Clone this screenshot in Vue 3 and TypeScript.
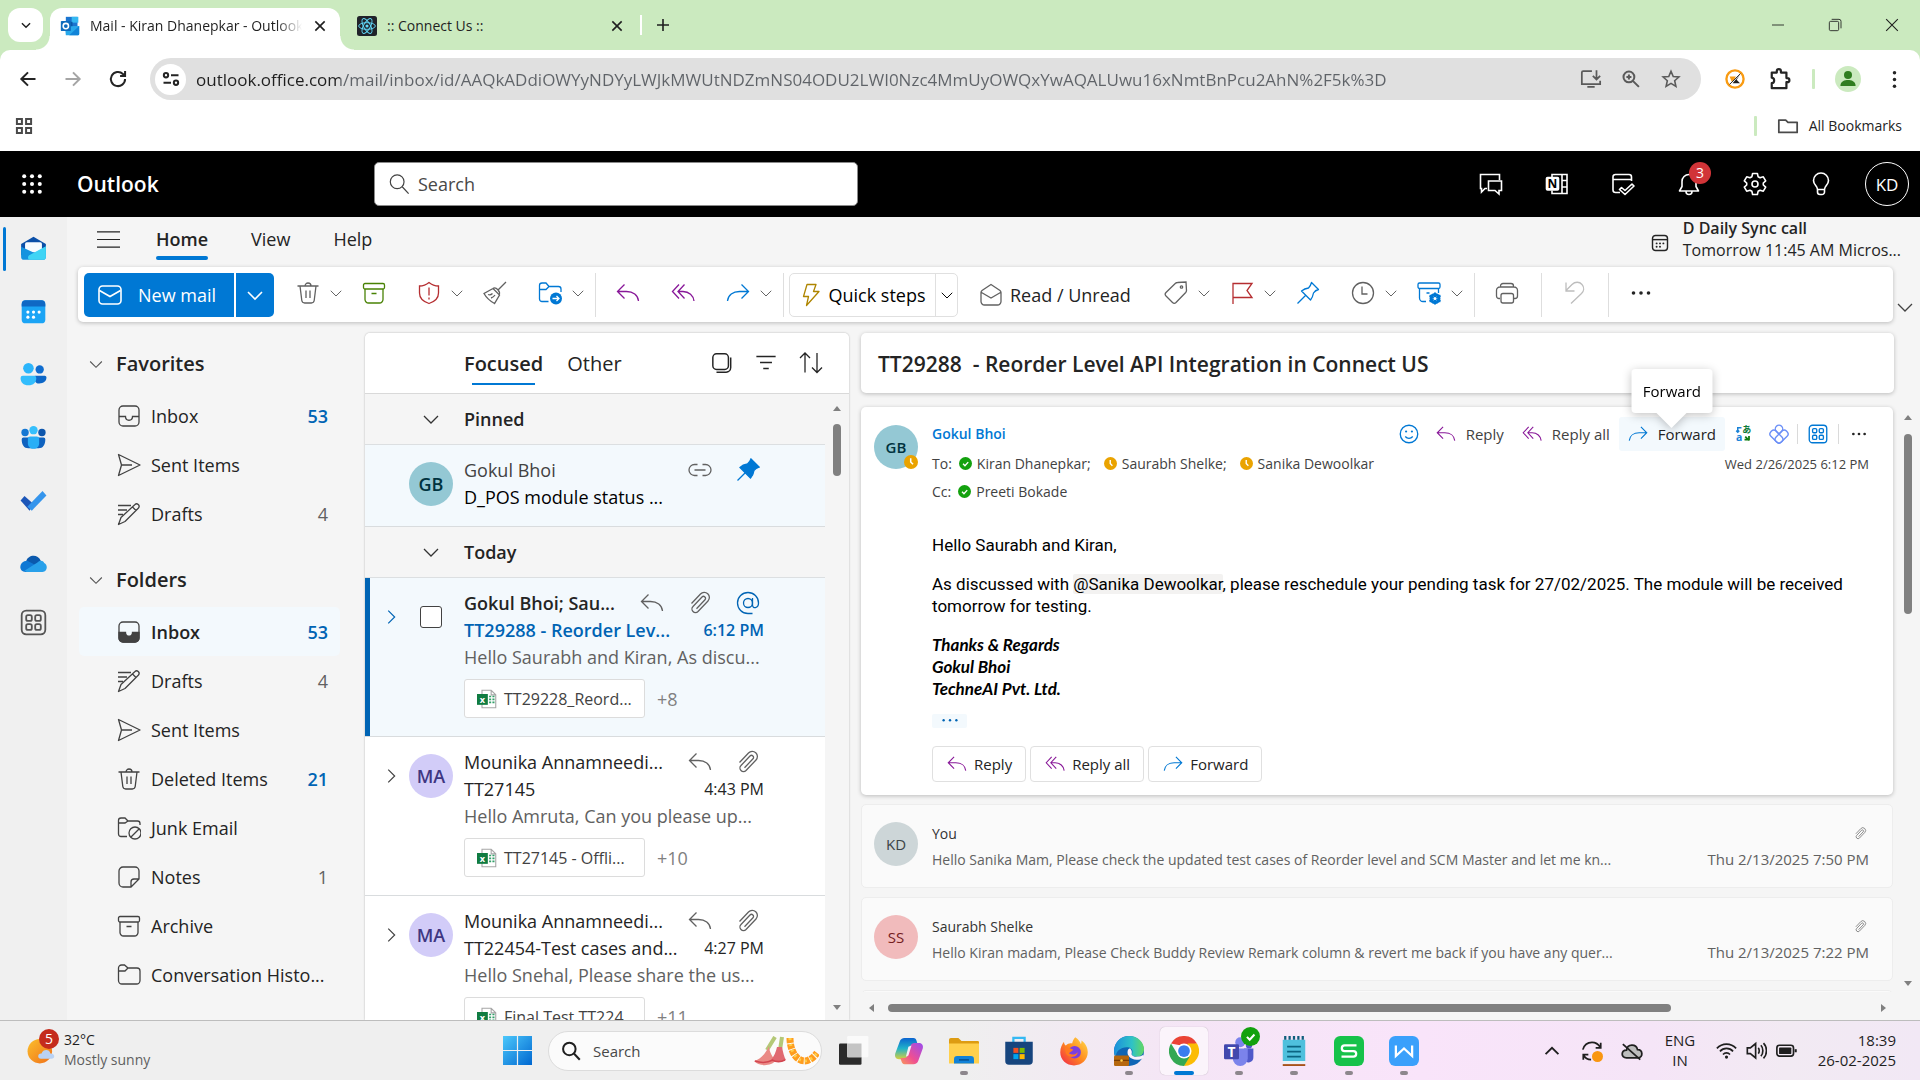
<script setup lang="ts">
import { h } from 'vue'

interface IconProps {
  name: string
  size?: number
}

interface Folder {
  label: string
  icon: string
  count?: number
  unread?: boolean
  active?: boolean
}

interface Mail {
  id: string
  initials: string
  from: string
  subject: string
  preview: string
  time: string
  attachment: string
  more: string
  icons: string[]
  selected?: boolean
}

const glyphs: Record<string, string> = {
  chevDown: '<path d="m5 9 7 7 7-7"/>',
  chevRight: '<path d="m9 5 7 7-7 7"/>',
  chevUp: '<path d="m5 15.500 7-7 7 7" stroke-width="2"/>',
  close: '<path d="m5 5 14 14M19 5 5 19"/>',
  plus: '<path d="M12 3v18M3 12h18"/>',
  minimize: '<path d="M3 12h18"/>',
  restore: '<rect x="3.500" y="6.500" width="14" height="14" rx="2"/><path d="M7 3.500h11a3 3 0 0 1 3 3V17"/>',
  back: '<path d="M21 12H4M12 4l-8 8 8 8"/>',
  next: '<path d="M3 12h17M12 4l8 8-8 8"/>',
  reload: '<path d="M20.500 12a8.500 8.500 0 1 1-2.600-6.100L20.500 8.400M20.500 2.500v6h-6"/>',
  tune: '<circle cx="6" cy="7.500" r="2.600"/><path d="M12 7.500h9M3 16.500h9"/><circle cx="18" cy="16.500" r="2.600"/>',
  apps4: '<path d="M3.500 3.500h6v6h-6zM14.500 3.500h6v6h-6zM3.500 14.500h6v6h-6zM14.500 14.500h6v6h-6z"/>',
  install: '<path d="M13 3.500H3.500a1.500 1.500 0 0 0-1.500 1.500v12.500h20V14M8 20.500h8M18 2.500v9M14 8.500l4 4 4-4"/>',
  zoomIn: '<circle cx="9.500" cy="9.500" r="6.500"/><path d="m14.500 14.500 7 7M9.500 6.500v6M6.500 9.500h6"/>',
  star: '<path d="m12 2.800 2.700 6.200 6.800.6-5.100 4.500 1.500 6.700L12 17.300l-5.900 3.500 1.500-6.700-5.100-4.500 6.800-.6z"/>',
  blocker: '<circle cx="12" cy="12" r="10.300" stroke="#f99b12" stroke-width="2.800" fill="#fff"/><path d="M9 17h9l-4-4 4-6" fill="#222" stroke="none"/><path d="M5.500 9H13l-2 4-3 2z" fill="#f99b12" stroke="none"/><path d="m5.500 18.500 13-13" stroke="#333" stroke-width="1.200"/>',
  puzzle: '<path d="M3 5h5.500V3.500a2 2 0 0 1 4.500 0V5H19v6h1a2 2 0 0 1 0 4.500h-1V22H3v-5.500c3.500-.4 3.500-5.600 0-6z" stroke-linejoin="round"/>',
  person: '<circle cx="12" cy="12" r="12" fill="#cbeabf" stroke="none"/><circle cx="12" cy="8.300" r="3.700" fill="#2f7d1f" stroke="none"/><path d="M5 18.500c0-4.500 4-5.500 7-5.500s7 1 7 5.500z" fill="#2f7d1f" stroke="none"/>',
  kebab: '<g fill="currentColor" stroke="none"><circle cx="12" cy="3.500" r="2.200"/><circle cx="12" cy="12" r="2.200"/><circle cx="12" cy="20.500" r="2.200"/></g>',
  folderLine: '<path d="M2 5.500h7.500l2.500 2.500H22v11H2z" stroke-linejoin="round"/>',
  outlook: '<rect x="7" y="1" width="14" height="12" fill="#1b75d0" stroke="none"/><rect x="14" y="1" width="8" height="7" fill="#35b8f1" stroke="none"/><rect x="7" y="7" width="8" height="8" fill="#0a5aa8" stroke="none"/><path d="M6 12.500 23 12v9.500a1.500 1.500 0 0 1-1.500 1.500H7z" fill="#28a8ea" stroke="none"/><path d="m23 12-12 11h10.500a1.500 1.500 0 0 0 1.500-1.500z" fill="#1184d8" stroke="none"/><rect x="1" y="6" width="12" height="12" rx="1" fill="#0f6cbd" stroke="none"/><circle cx="7" cy="12" r="3.200" stroke="#fff" stroke-width="1.900"/>',
  react: '<rect width="24" height="24" rx="3" fill="#20232a" stroke="none"/><g stroke="#61dafb" stroke-width="1.100"><ellipse cx="12" cy="12" rx="10" ry="4"/><ellipse cx="12" cy="12" rx="10" ry="4" transform="rotate(60 12 12)"/><ellipse cx="12" cy="12" rx="10" ry="4" transform="rotate(120 12 12)"/></g><circle cx="12" cy="12" r="1.900" fill="#61dafb" stroke="none"/>',
  waffle: '<g fill="currentColor" stroke="none"><circle cx="3.500" cy="3.500" r="2.200"/><circle cx="12" cy="3.500" r="2.200"/><circle cx="20.500" cy="3.500" r="2.200"/><circle cx="3.500" cy="12" r="2.200"/><circle cx="12" cy="12" r="2.200"/><circle cx="20.500" cy="12" r="2.200"/><circle cx="3.500" cy="20.500" r="2.200"/><circle cx="12" cy="20.500" r="2.200"/><circle cx="20.500" cy="20.500" r="2.200"/></g>',
  search: '<circle cx="10" cy="9.500" r="7.500"/><path d="m15.500 15 7 7.500"/>',
  chat: '<path d="M8 16.500H6l-3.500 3.500v-3.500H1.500v-14h19V8"/><path d="M9.500 9h13v9.500H20V22l-4-3.500H9.500z"/>',
  onenote: '<path d="M7 5.500V2.500h15v19H7v-3M17 2.500v19M17 8.500h5M17 15h5"/><rect x="1.500" y="5.500" width="12" height="12.500" rx="1" fill="#fff"/><text x="7.500" y="16" font-size="12" font-weight="700" text-anchor="middle" fill="#000" stroke="none" font-family="Open Sans, sans-serif">N</text>',
  dayCheck: '<path d="M20.500 9V5a2.500 2.500 0 0 0-2.500-2.500H4.500A2.500 2.500 0 0 0 2 5v13a2.500 2.500 0 0 0 2.500 2.500H9M2 7.500h18.500"/><path d="m8.500 17.500 2-2 3.500 3 7-6.500 2 2-9 8.500z" stroke-linejoin="round"/>',
  bell: '<path d="M12 2.500a7 7 0 0 0-7 7v5L2.500 19h19L19 14.500v-5a7 7 0 0 0-7-7zM9 19.500a3 3 0 0 0 6 0" stroke-linejoin="round"/>',
  gear: '<circle cx="12" cy="12" r="3"/><path d="M9.600 1.500h4.800l.7 3.200 2 1.100 3.200-1 2.400 4-2.400 2.200v2l2.400 2.200-2.400 4-3.200-1-2 1.100-.7 3.200H9.600l-.7-3.200-2-1.100-3.200 1-2.400-4L3.700 13v-2L1.300 8.800l2.400-4 3.200 1 2-1.100z" stroke-linejoin="round"/>',
  bulb: '<path d="M8.500 17.500c0-3.500-4-4.500-4-9a7.500 7.500 0 0 1 15 0c0 4.500-4 5.500-4 9zM8.500 17.500v2.500a2.500 2.500 0 0 0 2.500 2.500h2a2.500 2.500 0 0 0 2.500-2.500v-2.500"/>',
  menu: '<path d="M0 4h24M0 12h24M0 20h24"/>',
  calendarSmall: '<rect x="2" y="2" width="20" height="20" rx="4"/><path d="M2 7.500h20"/><g fill="currentColor" stroke="none"><circle cx="7.500" cy="12.500" r="1.300"/><circle cx="12" cy="12.500" r="1.300"/><circle cx="16.500" cy="12.500" r="1.300"/><circle cx="7.500" cy="17" r="1.300"/><circle cx="12" cy="17" r="1.300"/></g>',
  mail: '<rect x="1" y="3" width="22" height="18" rx="3.500"/><path d="m1.500 7.500 10.500 6 10.500-6"/>',
  trash: '<path d="M1.500 5h21M9 5a3 3 0 0 1 6 0M4 5l1.800 14.500a3 3 0 0 0 3 2.500h6.400a3 3 0 0 0 3-2.500L20 5M10 9.500v7.500M14 9.500v7.500"/>',
  archive: '<rect x="1.500" y="2.500" width="21" height="5.500" rx="1.500"/><path d="M3 8v10.500A3.500 3.500 0 0 0 6.500 22h11a3.500 3.500 0 0 0 3.500-3.500V8M9.500 12.500h5"/>',
  shield: '<path d="M12 1.500c3 2.500 6 3.500 9.500 3.500v7c0 5-3.500 8.500-9.500 10.500C6 20.500 2.500 17 2.500 12V5C6 5 9 4 12 1.500zM12 6.500v8M12 16.500v2"/>',
  broom: '<path d="m23 1-8 8M10 7.500c3-2 8 3 6 6.500M10 7.500l6.500 6.500-5 8.500C7 20 3.500 17 1 12.500zM5 13.500c2 .8 3.500 0 4.500-1M8 17c2-.5 3-1.500 4-3"/>',
  moveFolder: '<path d="M10.500 20.500H4A2.500 2.500 0 0 1 1.500 18V4.500A2.500 2.500 0 0 1 4 2h4l3 3.500h9.500A2.500 2.500 0 0 1 23 8v3M1.500 8.500H8l3-3"/><circle cx="18" cy="17.500" r="6" fill="#0078d4" stroke="none"/><path d="M14.500 17.500h6.500M18.500 15l2.500 2.500-2.500 2.500" stroke="#fff"/>',
  reply: '<path d="m8.500 3.500-7 7 7 7M1.500 10.500h9c6.500 0 11.500 3.500 12 9.500"/>',
  replyAll: '<path d="m8 3.500-6.500 7 6.500 7M13.500 3.500l-6.500 7 6.500 7M7 10.500h5c6 0 10.500 4 11 9.500"/>',
  forward: '<path d="m15.500 3.500 7 7-7 7M22.500 10.500h-9C7 10.500 2 14 1.500 20"/>',
  bolt: '<path d="M8 1.500h9l-2.500 7H20L7.500 22.500l2-9H4.500z" stroke-linejoin="round"/>',
  mailOpen: '<path d="M2 9.500v9A3.500 3.500 0 0 0 5.500 22h13a3.500 3.500 0 0 0 3.500-3.500v-9c0-.8-.4-1.500-1-2L12 1.500 3 7.500c-.6.5-1 1.200-1 2zM2.500 9.500 12 15l9.500-5.500"/>',
  tag: '<path d="M13.500 1.500 22 1l.5 8.500a3 3 0 0 1-.8 2L12 21.500a2.500 2.500 0 0 1-3.500 0L2 15a2.500 2.500 0 0 1 0-3.500L11.500 2.300a3 3 0 0 1 2-.8z"/><circle cx="17.500" cy="6" r="1.200"/>',
  flag: '<path d="M3 23V2.500h19l-5 7 5 7H3"/>',
  pin: '<path d="M15.500 1.500 22.500 8.500c-2 .5-4 2-5 3.500-.5 3-1.500 5-3 7l-9-9c2-1.500 4-2.500 7-3 1.500-1.500 2.500-3.500 3-5.500zM9.500 14.500l-8 8" stroke-linejoin="round"/>',
  pinFill: '<path d="M15 1 23 9c-2 .5-4 2-5 3.500-.5 3-1.500 5.500-3.500 7.500L4 9.500C6 7.500 8.500 6.500 11.500 6 13 4.500 14.500 3 15 1z" fill="currentColor"/><path d="m9.500 14.500-8 8"/>',
  clock: '<circle cx="12" cy="12" r="10.500"/><path d="M11 5.500V13h5.500"/>',
  archiveGear: '<path d="M21.500 12V8M9 20.500H6A3.500 3.500 0 0 1 2.500 17V7.500M9.500 12h3"/><rect x="1" y="2" width="22" height="5.500" rx="1.500"/><circle cx="18" cy="17.500" r="4" stroke-width="3"/><path d="M18 11.500v12M12.500 14.500l11 6M23.500 14.500l-11 6" stroke-width="2"/><circle cx="18" cy="17.500" r="1.500" fill="#fff" stroke="none"/>',
  print: '<path d="M5 17.500H4A2.500 2.500 0 0 1 1.500 15V9.500A3.500 3.500 0 0 1 5 6h14a3.500 3.500 0 0 1 3.500 3.500V15a2.500 2.500 0 0 1-2.500 2.500h-1M5.500 6V5A2.500 2.500 0 0 1 8 2.500h8A2.500 2.500 0 0 1 18.500 5v1"/><rect x="6" y="12.500" width="12.500" height="9.500" rx="2"/>',
  undo: '<path d="M4 1.500V10h8.500M4 9.500l6-6c3-3 7.500-3 10 0 2.500 2.800 2 6.500-.5 9L9 22.500"/>',
  dots: '<g fill="currentColor" stroke="none"><circle cx="4.500" cy="12" r="1.800"/><circle cx="12" cy="12" r="1.800"/><circle cx="19.500" cy="12" r="1.800"/></g>',
  dotsSmall: '<g fill="currentColor" stroke="none"><circle cx="3.500" cy="11" r="1.600"/><circle cx="12" cy="11" r="1.600"/><circle cx="20.500" cy="11" r="1.600"/></g>',
  inbox: '<rect x="2" y="2" width="20" height="20" rx="4"/><path d="M2 12.500h6.500c0 5 7 5 7 0H22"/>',
  inboxFill: '<rect x="2" y="2" width="20" height="20" rx="4"/><path d="M2 12.500h6.500c0 5 7 5 7 0H22V18a4 4 0 0 1-4 4H6a4 4 0 0 1-4-4z" fill="currentColor"/>',
  send: '<path d="M1.500 1.500 23 12 1.500 22.500 4.500 12zM4.500 12H15" stroke-linejoin="round"/>',
  draft: '<path d="M1 3.500h13M1 8h9M1 12.500h5"/><path d="M18 2.500c2-2 5.500 1 3.500 3.500L8 19.500 1.500 22.500l2.500-7zM15.500 5l3.500 3.500" stroke-linejoin="round"/>',
  junk: '<path d="M10 20.500H4A2.500 2.500 0 0 1 1.500 18V4.500A2.500 2.500 0 0 1 4 2h4l3 3h9.500A2.500 2.500 0 0 1 23 7.500V9M1.500 7H8l3-2"/><circle cx="18" cy="17" r="6"/><path d="m14 21 8-8"/>',
  note: '<path d="M14 22H6a4 4 0 0 1-4-4V6a4 4 0 0 1 4-4h12a4 4 0 0 1 4 4v8zM14 22v-5a3 3 0 0 1 3-3h5"/>',
  folder: '<path d="M1.500 5A3 3 0 0 1 4.500 2h3L11 5h9a3 3 0 0 1 3 3v9.500a3.500 3.500 0 0 1-3.500 3.500H5a3.500 3.500 0 0 1-3.500-3.500zM1.500 8H8l3-3"/>',
  select: '<rect x="2" y="2" width="17" height="17" rx="4"/><path d="M21.500 6v11a5 5 0 0 1-5 5H6"/>',
  filter: '<path d="M1.500 5h21M5.500 11.500h13M9 18h6"/>',
  sort: '<path d="M6 21.500V2M1 7l5-5 5 5M18 2v19.500M13 16.500l5 5 5-5"/>',
  link: '<path d="M9.500 6.500h-3a5.500 5.500 0 0 0 0 11h3M14.500 6.500h3a5.500 5.500 0 0 1 0 11h-3M6.500 12h11"/>',
  clip: '<path d="m3.500 12.500 9-9.500a5 5 0 0 1 7.500 7L10 20.500a3.500 3.500 0 0 1-5-5l9-9.500a2 2 0 0 1 3 2.800l-8.500 9"/>',
  at: '<circle cx="12" cy="12" r="4.500"/><path d="M16.500 7v7c0 4 6 3.500 6-2A10.500 10.500 0 1 0 12 22.500h4.500"/>',
  excel: '<path d="M6 1.500h11l5.500 5.500v15.500H6zM17 1.500V7h5.500" fill="#fff" stroke="#a6a6a6"/><rect x="0" y="6" width="13" height="13" fill="#107c41" stroke="none"/><path d="M14.500 9h2.500M18.500 9h2.500M14.500 12.500h2.500M18.500 12.500h2.500M14.500 16h2.500M18.500 16h2.500" stroke="#33a06a" stroke-width="2"/><text x="6.500" y="16.500" font-size="11" font-weight="700" text-anchor="middle" fill="#fff" stroke="none" font-family="Open Sans, sans-serif">x</text>',
  smile: '<circle cx="12" cy="12" r="10.500"/><path d="M7.500 15c2.500 3 6.500 3 9 0"/><circle cx="8.500" cy="9" r="1.300" fill="currentColor" stroke="none"/><circle cx="15.500" cy="9" r="1.300" fill="currentColor" stroke="none"/>',
  translate: '<g stroke="none"><text x="17" y="11" font-size="12" font-weight="700" text-anchor="middle" fill="#0f7b3a" font-family="Noto Sans CJK JP, sans-serif">あ</text><text x="7" y="21.500" font-size="14" font-weight="700" text-anchor="middle" fill="#1a82d6" font-family="Open Sans, sans-serif">a</text></g><path d="M10 3.500H5v6M3 7.500l2 2 2-2" stroke="#1a82d6" stroke-width="2"/><path d="M14 19.500h6v-5M15 15.500l5 5" stroke="#107c10" stroke-width="2.400"/>',
  loop: '<g transform="rotate(45 12 12)" stroke="#6b8ff7" stroke-width="1.500"><rect x="4" y="12" width="16" height="8" rx="3.500"/><rect x="12" y="4" width="8" height="16" rx="3.500"/><path d="M12 12H8a4 4 0 1 1 4-4z"/></g>',
  appGrid: '<rect x="1.500" y="1.500" width="21" height="21" rx="4"/><rect x="5.500" y="5.500" width="5" height="5" rx="1.500"/><rect x="13.500" y="5.500" width="5" height="5" rx="1.500"/><rect x="5.500" y="13.500" width="5" height="5" rx="1.500"/><rect x="13.500" y="13.500" width="5" height="5" rx="1.500"/>',
  away: '<circle cx="12" cy="12" r="12" fill="#eaa300" stroke="none"/><path d="M11.500 5.500V12l4 4" stroke="#fff" stroke-width="2.600"/>',
  available: '<circle cx="12" cy="12" r="12" fill="#13a10e" stroke="none"/><path d="m7.500 12.500 3.500 3.500 6-6.500" stroke="#fff" stroke-width="2.600"/>',
  railMail: '<g stroke="none"><path d="M1 8 12 1.500 23 8v10H1z" fill="#0b4fa8"/><rect x="4.500" y="6.500" width="15" height="9" rx="1.500" fill="#f7fbff"/><path d="M1 10.500v9A2.500 2.500 0 0 0 3.500 22h17a2.500 2.500 0 0 0 2.500-2.500v-9L13 16z" fill="#1493df"/><path d="M23 10v9.500a2.500 2.500 0 0 1-2.500 2.500H9c-2.500 0-2.500-3.500 0-4.500z" fill="#3fd4f5"/></g>',
  railCalendar: '<g stroke="none"><rect x="1.500" y="2" width="21" height="20.500" rx="3.500" fill="#1ba4f5"/><path d="M1.500 7.500v-2A3.500 3.500 0 0 1 5 2h14a3.500 3.500 0 0 1 3.500 3.500v2z" fill="#0f68c4"/><g fill="#fff"><circle cx="7" cy="12.500" r="1.400"/><circle cx="12" cy="12.500" r="1.400"/><circle cx="17" cy="12.500" r="1.400"/><circle cx="7" cy="17" r="1.400"/><circle cx="12" cy="17" r="1.400"/></g></g>',
  railPeople: '<g stroke="none"><circle cx="17.500" cy="7.500" r="3.700" fill="#0f6ccf"/><path d="M13 13h9a1.500 1.500 0 0 1 1.500 1.500c0 3.500-2.500 5.500-6.500 5.500s-4-3-4-7z" fill="#0c66c7"/><circle cx="7.500" cy="6.500" r="4.700" fill="#2bb5fb"/><path d="M2.500 13h10a2 2 0 0 1 2 2c0 4-2.500 6.500-7 6.500S.5 19 .5 15a2 2 0 0 1 2-2z" fill="#33bdfc"/></g>',
  railGroups: '<g stroke="none"><circle cx="4.500" cy="7.500" r="3.300" fill="#1577d3"/><circle cx="19.500" cy="7.500" r="3.300" fill="#0d56ad"/><path d="M3 12h18a1.500 1.500 0 0 1 1.500 1.500c0 5-2 8-6 8h-9c-4 0-6-3-6-8A1.500 1.500 0 0 1 3 12z" fill="#0f62bf"/><circle cx="12" cy="5.500" r="3.700" fill="#36bffc"/><path d="M9 11h6a2 2 0 0 1 2 2v4c0 3-2 5-5 5s-5-2-5-5v-4a2 2 0 0 1 2-2z" fill="#29aef6"/></g>',
  railTodo: '<g stroke="none"><path d="m.5 12 3.500-4 8 7-3.500 6z" fill="#1c56b8"/><path d="M6.500 17.500 20 3.500l3.500 4L10.500 21z" fill="#3595ec"/></g>',
  railCloud: '<g stroke="none"><path d="M5.500 10C7 4.500 15.500 3 18.500 9.500L12 15z" fill="#0b59ad"/><path d="M5 19.500c-7 0-6-10 1.500-10L15 14l-3 5.500z" fill="#0f78d4"/><path d="M4 18.500 15.500 11c2-2 5-2 6 .5 3.500 1.500 3 8-1.500 8H6z" fill="#28a0ea"/></g>',
  weather: '<defs><linearGradient id="sun" x1="0" y1="0" x2="1" y2="1"><stop offset="0" stop-color="#fbbf2c"/><stop offset="1" stop-color="#f0701a"/></linearGradient></defs><circle cx="11" cy="13" r="10.500" fill="url(#sun)" stroke="none"/><path d="M12 19.500c-3.500 0-3-5 .5-4.500 1-4 7-4 7.500 0 4-.5 4.500 4.500 1 4.500z" fill="#b9d2f4" stroke="none"/>',
  windows: '<defs><linearGradient id="win" x1="0" y1="0" x2="1" y2="1"><stop offset="0" stop-color="#4cc8fb"/><stop offset="1" stop-color="#0067d0"/></linearGradient></defs><path d="M0 0h11.500v11.500H0zM12.500 0H24v11.500H12.500zM0 12.500h11.500V24H0zM12.500 12.500H24V24H12.500z" fill="url(#win)" stroke="none"/>',
  taskView: '<rect x="0" y="6" width="18" height="17" rx="1" fill="#2b2b2b" stroke="none"/><rect x="6.500" y="0" width="17" height="17" rx="1" fill="#fafafa" stroke="none"/><path d="M6.500 6H18v11H6.500z" fill="#c4c4c4" stroke="none"/>',
  copilot: '<defs><linearGradient id="cpa" x1="0" y1="0" x2="0" y2="1"><stop offset="0" stop-color="#0a62d0"/><stop offset=".5" stop-color="#21b3c9"/><stop offset="1" stop-color="#d6cf3e"/></linearGradient><linearGradient id="cpb" x1="1" y1="0" x2="0" y2="1"><stop offset="0" stop-color="#9a4cf0"/><stop offset=".6" stop-color="#ef4f92"/><stop offset="1" stop-color="#f89a5b"/></linearGradient></defs><path d="M8.500 1.500h7c1.500 0 2.200 1 2.600 2.500l.8 2.500h-3c-1.800 0-2.600 1-3.200 3L11 15.500c-.6 2-1.400 3-3.500 3H4C1.500 18.500.3 16.500 1 14L4.500 4.500c.7-2 2-3 4-3z" fill="url(#cpa)" stroke="none"/><path d="M15.500 22.500h-7c-1.500 0-2.200-1-2.600-2.500l-.8-2.500h3c1.800 0 2.600-1 3.200-3L13 8.500c.6-2 1.400-3 3.500-3H20c2.500 0 3.700 2 3 4.500l-3.500 9.500c-.7 2-2 3-4 3z" fill="url(#cpb)" stroke="none"/><path d="m11.500 8.500 2.500-1-2.500 8-2 1z" fill="#f6eef8" stroke="none"/>',
  explorer: '<g stroke="none"><path d="M0 3a1.500 1.500 0 0 1 1.500-1.500h6L10 4h13a1 1 0 0 1 1 1v6H0z" fill="#dd9c12"/><path d="M0 6h24v16H0z" fill="#ffd04c"/><path d="M4 22v-3.500A2.500 2.500 0 0 1 6.500 16h11a2.500 2.500 0 0 1 2.500 2.500V22z" fill="#1282d8"/><rect x="8" y="18.500" width="8" height="1.200" fill="#07508f"/></g>',
  store: '<path d="M7.500 5V1.500h9V5" stroke="#35b9f3" stroke-width="1.800"/><path d="M1 4.500h22V20a3 3 0 0 1-3 3H4a3 3 0 0 1-3-3z" fill="#17457e" stroke="none"/><g stroke="none"><rect x="7.500" y="9.500" width="4" height="4" fill="#f25022"/><rect x="12.500" y="9.500" width="4" height="4" fill="#7fba00"/><rect x="7.500" y="14.500" width="4" height="4" fill="#00a4ef"/><rect x="12.500" y="14.500" width="4" height="4" fill="#ffb900"/></g>',
  firefox: '<defs><linearGradient id="ffx" x1="1" y1="0" x2="0" y2="1"><stop offset="0" stop-color="#ffe14a"/><stop offset=".5" stop-color="#ff8a1e"/><stop offset="1" stop-color="#f0224c"/></linearGradient></defs><path d="M13 1c3 2 4 4 4.500 5.500C18 5.500 18 4.500 18 3.500c3.500 2.500 5 6 5 9.500 0 6-5 10.500-11 10.500S1 19 1 13c0-4 1.500-6.500 3-8.500 0 1.500.5 2.500 1.500 3C7 6 9 5.500 10.500 6 11 4 11.500 2.500 13 1z" fill="url(#ffx)" stroke="none"/><circle cx="12.500" cy="13" r="5" fill="#7a3fe0" stroke="none"/><path d="M4.500 9c3 0 4.500 1 7 2-1 1.500-3 1.500-3.500 3 3 1.500 5 1 7-1-.5 4-7 5.500-9.500 1z" fill="#ff7a20" stroke="none"/>',
  edge: '<defs><linearGradient id="edg" x1="0" y1="0" x2="1" y2="0"><stop offset="0" stop-color="#1b8fdc"/><stop offset=".6" stop-color="#2fc2c6"/><stop offset="1" stop-color="#63d861"/></linearGradient></defs><circle cx="12" cy="12" r="12" fill="#0f65b5" stroke="none"/><path d="M0 11C1 4 6 0 12 0c7 0 12 5 12 10.500 0 4-3 6-6 6-2.500 0-4-1-3.500-2.500.8-1.500.3-4.500-3.500-5C6 8.500 1 12 1.500 17 .3 15 0 13 0 11z" fill="url(#edg)" stroke="none"/><path d="M11 11.500c-1 4 2 7 7 7.500 2 0 4-.5 5.500-1.500V15c-2 1.500-8 3-9.500-.5.5-1.500.3-3-1-4.500-1 0-1.500.5-2 1.500z" fill="#fbf2fb" stroke="none"/><rect y="15.500" width="12" height="8.500" rx="1" fill="#b5670e" stroke="none"/><path d="M0 19.500h12" stroke="#7a3d00" stroke-width="1"/><circle cx="6" cy="19.500" r="1" fill="#ffd04c" stroke="none"/>',
  chrome: '<g stroke="none"><path d="M1.600 6A12 12 0 0 1 22.400 6L12 8z" fill="#ea4335"/><path d="M22.400 6A12 12 0 0 1 12 24l4-10-1-8z" fill="#fbbc05"/><path d="M1.600 6A12 12 0 0 0 12 24l4.500-7.500-9-1z" fill="#34a853"/><circle cx="12" cy="12" r="6" fill="#fff"/><circle cx="12" cy="12" r="4.700" fill="#3b7ded"/></g>',
  teams: '<g stroke="none"><circle cx="13" cy="5" r="4" fill="#7b83eb"/><circle cx="20" cy="7.500" r="2.500" fill="#5059c9"/><path d="M16 10h7.500v7a4 4 0 0 1-7.500 2z" fill="#5059c9"/><path d="M7 10h12v8a6 6 0 0 1-12 0z" fill="#7b83eb"/><rect x="0" y="6.500" width="12" height="12" rx="1" fill="#4248ad"/><text x="6" y="16.500" font-size="11" font-weight="700" text-anchor="middle" fill="#fff" font-family="Open Sans, sans-serif">T</text></g>',
  notepad: '<g stroke="none"><path d="M3 3h18v17H3z" fill="#4fc0dd"/><path d="M3 20h18v2H3z" fill="#e9f3f6"/><path d="M3 22.500h18V24H3z" fill="#a7521a"/></g><path d="M5 0v3M8.500 0v3M12 0v3M15.500 0v3M19 0v3" stroke="#0e5e7c" stroke-width="1.800"/><path d="M6.500 8.500h11M6.500 12.500h11M6.500 16.500h11" stroke="#0b6482" stroke-width="1.300"/>',
  sheets: '<rect width="24" height="24" rx="5" fill="#16c24a" stroke="none"/><path d="M18 7.500H8.500a2.200 2.200 0 0 0 0 4.500h7a2.200 2.200 0 0 1 0 4.500H6" stroke="#fff" stroke-width="1.800"/>',
  writer: '<rect width="24" height="24" rx="5" fill="#3aa0fb" stroke="none"/><path d="M5.500 7.500v8.500l6.500-6 6.500 6V7.500" stroke="#fff" stroke-width="1.800"/>',
  sync: '<path d="M2 10.500C3.500 5 7 2.500 12 2.500c4 0 7 2 9 5.500M21.500 3v5.500H16M11 21.500c-4 0-6.500-1.500-8-5M2.500 21.500V16H8"/><circle cx="18" cy="18" r="6" fill="#f99610" stroke="none"/>',
  cloudOff: '<path d="M6 19.500C-.5 19.500 0 11 6 11 7 4 16.500 4 18 10.500c6-.5 6.500 9 .5 9z" fill="#bdbdbd"/><path d="m2 4.500 19 17"/>',
  wifi: '<path d="M1 9.500c6-6.500 16-6.500 22 0M4.500 13c4-4.500 11-4.500 15 0M8 16.500c2.200-2.500 5.800-2.500 8 0"/><circle cx="12" cy="19.500" r="1.800" fill="currentColor" stroke="none"/>',
  volume: '<path d="M1.500 9v6.500H5l6 5V4L5 9zM14 9c1.500 1.500 1.500 5 0 6.500M17 6c3 3 3 9.500 0 12.500M20 3.500c4.500 4.500 4.500 13 0 17.500"/>',
  battery: '<rect x="1" y="6" width="19" height="12.500" rx="3"/><rect x="3.500" y="8.500" width="14" height="7.500" rx="1" fill="currentColor" stroke="none"/><path d="M22.500 10.500v3.500" stroke-width="2.400"/>',
}

const Icon = (p: IconProps) =>
  h('svg', {
    viewBox: '0 0 24 24',
    width: p.size ?? 24,
    height: p.size ?? 24,
    fill: 'none',
    stroke: 'currentColor',
    'stroke-width': 1.3,
    'aria-hidden': 'true',
    innerHTML: glyphs[p.name],
  })

const pageUrl =
  'outlook.office.com/mail/inbox/id/AAQkADdiOWYyNDYyLWJkMWUtNDZmNS04ODU2LWI0Nzc4MmUyOWQxYwAQALUwu16xNmtBnPcu2AhN%2F5k%3D'

const suiteActions = [
  { icon: 'chat', label: 'Teams chat' },
  { icon: 'onenote', label: 'OneNote feed' },
  { icon: 'dayCheck', label: 'My Day' },
  { icon: 'bell', label: 'Notifications', badge: 3 },
  { icon: 'gear', label: 'Settings' },
  { icon: 'bulb', label: 'Tips' },
]

const rail = [
  { icon: 'railMail', label: 'Mail' },
  { icon: 'railCalendar', label: 'Calendar' },
  { icon: 'railPeople', label: 'People' },
  { icon: 'railGroups', label: 'Groups' },
  { icon: 'railTodo', label: 'To Do' },
  { icon: 'railCloud', label: 'OneDrive' },
  { icon: 'appGrid', label: 'More apps' },
]

const organise = [
  { icon: 'trash', label: 'Delete', tone: 'grey', split: true },
  { icon: 'archive', label: 'Archive', tone: 'green' },
  { icon: 'shield', label: 'Report', tone: 'red', split: true },
  { icon: 'broom', label: 'Sweep', tone: 'grey' },
  { icon: 'moveFolder', label: 'Move to', tone: 'blue', split: true },
]
const respond = [
  { icon: 'reply', label: 'Reply', tone: 'purple' },
  { icon: 'replyAll', label: 'Reply all', tone: 'purple' },
  { icon: 'forward', label: 'Forward', tone: 'blue', split: true },
]
const marking = [
  { icon: 'tag', label: 'Categorize', tone: 'grey', split: true },
  { icon: 'flag', label: 'Flag', tone: 'red', split: true },
  { icon: 'pin', label: 'Pin', tone: 'blue' },
  { icon: 'clock', label: 'Snooze', tone: 'grey', split: true },
  { icon: 'archiveGear', label: 'Rules', tone: 'blue', split: true },
]
const trailing = [
  { icon: 'print', label: 'Print', tone: 'grey' },
  { icon: 'undo', label: 'Undo', tone: 'faded' },
  { icon: 'dots', label: 'More options', tone: 'dark' },
]

const favorites: Folder[] = [
  { label: 'Inbox', icon: 'inbox', count: 53, unread: true },
  { label: 'Sent Items', icon: 'send' },
  { label: 'Drafts', icon: 'draft', count: 4 },
]
const folders: Folder[] = [
  { label: 'Inbox', icon: 'inboxFill', count: 53, unread: true, active: true },
  { label: 'Drafts', icon: 'draft', count: 4 },
  { label: 'Sent Items', icon: 'send' },
  { label: 'Deleted Items', icon: 'trash', count: 21, unread: true },
  { label: 'Junk Email', icon: 'junk' },
  { label: 'Notes', icon: 'note', count: 1 },
  { label: 'Archive', icon: 'archive' },
  { label: 'Conversation Histo...', icon: 'folder' },
]
const trees = [
  { title: 'Favorites', items: favorites },
  { title: 'Folders', items: folders },
]

const mails: Mail[] = [
  {
    id: 'tt29288',
    initials: 'GB',
    from: 'Gokul Bhoi; Sau...',
    subject: 'TT29288 - Reorder Lev...',
    preview: 'Hello Saurabh and Kiran, As discu...',
    time: '6:12 PM',
    attachment: 'TT29228_Reord...',
    more: '+8',
    icons: ['reply', 'clip', 'at'],
    selected: true,
  },
  {
    id: 'tt27145',
    initials: 'MA',
    from: 'Mounika Annamneedi...',
    subject: 'TT27145',
    preview: 'Hello Amruta, Can you please up...',
    time: '4:43 PM',
    attachment: 'TT27145 - Offli...',
    more: '+10',
    icons: ['reply', 'clip'],
  },
  {
    id: 'tt22454',
    initials: 'MA',
    from: 'Mounika Annamneedi...',
    subject: 'TT22454-Test cases and...',
    preview: 'Hello Snehal, Please share the us...',
    time: '4:27 PM',
    attachment: 'Final Test TT224...',
    more: '+11',
    icons: ['reply', 'clip'],
  },
]

const recipients = [
  { name: 'Kiran Dhanepkar;', status: 'available' },
  { name: 'Saurabh Shelke;', status: 'away' },
  { name: 'Sanika Dewoolkar', status: 'away' },
]

const earlier = [
  {
    initials: 'KD',
    tone: 'slate',
    from: 'You',
    preview: 'Hello Sanika Mam, Please check the updated test cases of Reorder level and SCM Master and let me kn...',
    date: 'Thu 2/13/2025 7:50 PM',
  },
  {
    initials: 'SS',
    tone: 'rose',
    from: 'Saurabh Shelke',
    preview: 'Hello Kiran madam, Please Check Buddy Review Remark column & revert me back if you have any quer...',
    date: 'Thu 2/13/2025 7:22 PM',
  },
]

const taskApps = [
  { icon: 'taskView', label: 'Task view' },
  { icon: 'copilot', label: 'Copilot' },
  { icon: 'explorer', label: 'File Explorer', running: true },
  { icon: 'store', label: 'Microsoft Store' },
  { icon: 'firefox', label: 'Firefox' },
  { icon: 'edge', label: 'Edge', running: true },
  { icon: 'chrome', label: 'Chrome', running: true, active: true },
  { icon: 'teams', label: 'Teams', running: true, online: true },
  { icon: 'notepad', label: 'Notepad', running: true },
  { icon: 'sheets', label: 'Spreadsheets', running: true },
  { icon: 'writer', label: 'Writer', running: true },
]
</script>

<template>
  <div class="desktop">
    <header class="tabstrip">
      <button class="tab-search" aria-label="Search tabs"><Icon name="chevDown" :size="14" class="bold" /></button>
      <div class="tab current">
        <Icon name="outlook" :size="20" />
        <span class="tab-title fade">Mail - Kiran Dhanepkar - Outlook</span>
        <button class="tab-close" aria-label="Close tab"><Icon name="close" :size="16" class="bold" /></button>
      </div>
      <div class="tab">
        <Icon name="react" :size="20" />
        <span class="tab-title">:: Connect Us ::</span>
        <button class="tab-close" aria-label="Close tab"><Icon name="close" :size="16" class="bold" /></button>
      </div>
      <span class="tab-divider"></span>
      <button class="new-tab" aria-label="New tab"><Icon name="plus" :size="16" class="bold" /></button>
      <div class="window-controls">
        <button aria-label="Minimize"><Icon name="minimize" :size="16" /></button>
        <button aria-label="Restore"><Icon name="restore" :size="16" /></button>
        <button aria-label="Close"><Icon name="close" :size="20" /></button>
      </div>
    </header>

    <div class="browser">
      <div class="navbar">
        <button class="nav" aria-label="Back"><Icon name="back" :size="20" class="bold" /></button>
        <button class="nav dim" aria-label="Forward"><Icon name="next" :size="20" class="bold" /></button>
        <button class="nav" aria-label="Reload"><Icon name="reload" :size="20" class="bold" /></button>
        <div class="omnibox">
          <button class="site-info" aria-label="Site information"><Icon name="tune" :size="20" class="bold" /></button>
          <input class="url" type="text" aria-label="Address" :value="pageUrl" spellcheck="false" />
          <button class="omni-btn" aria-label="Install app"><Icon name="install" :size="22" class="medium" /></button>
          <button class="omni-btn" aria-label="Zoom"><Icon name="zoomIn" :size="20" class="bold" /></button>
          <button class="omni-btn" aria-label="Bookmark"><Icon name="star" :size="20" class="medium" /></button>
        </div>
        <button class="ext" aria-label="Blocker"><Icon name="blocker" :size="20" /></button>
        <button class="ext" aria-label="Extensions"><Icon name="puzzle" :size="22" class="bold" /></button>
        <span class="green-rule"></span>
        <button class="profile" aria-label="Profile"><Icon name="person" :size="26" /></button>
        <button class="kebab" aria-label="Menu"><Icon name="kebab" :size="19" /></button>
      </div>
      <div class="bookmarks">
        <button class="bm-apps" aria-label="Apps"><Icon name="apps4" :size="20" class="bold" /></button>
        <span class="green-rule"></span>
        <button class="bm-all"><Icon name="folderLine" :size="22" class="medium" />All Bookmarks</button>
      </div>
    </div>

    <div class="suite">
      <button class="waffle" aria-label="App launcher"><Icon name="waffle" :size="22" /></button>
      <span class="brand">Outlook</span>
      <label class="suite-search">
        <Icon name="search" :size="22" />
        <input type="search" placeholder="Search" aria-label="Search mail" />
      </label>
      <div class="suite-actions">
        <button v-for="a in suiteActions" :key="a.icon" :aria-label="a.label">
          <Icon :name="a.icon" :size="24" class="thick" />
          <span v-if="a.badge" class="badge">{{ a.badge }}</span>
        </button>
        <button aria-label="Account"><span class="account">KD</span></button>
      </div>
    </div>

    <div class="app">
      <nav class="rail" aria-label="Apps">
        <a v-for="(r, i) in rail" :key="r.icon" href="#" :aria-label="r.label" :class="{ on: i === 0, more: i === rail.length - 1 }">
          <Icon :name="r.icon" :size="27" class="thick" />
        </a>
      </nav>

      <div class="workspace">
        <div class="ribbon-tabs">
          <button class="burger" aria-label="Toggle navigation"><Icon name="menu" :size="23" /></button>
          <button class="ribbon-tab on">Home</button>
          <button class="ribbon-tab">View</button>
          <button class="ribbon-tab">Help</button>
          <a class="reminder" href="#">
            <Icon name="calendarSmall" :size="18" class="medium" />
            <span><b>D Daily Sync call</b><br />Tomorrow 11:45 AM Micros...</span>
          </a>
        </div>

        <div class="ribbon-row">
          <div class="ribbon" role="toolbar" aria-label="Message actions">
            <button class="new-mail"><Icon name="mail" :size="24" class="thick" />New mail</button>
            <button class="new-mail-more" aria-label="More new items"><Icon name="chevDown" :size="24" class="thick" /></button>
            <div class="group first">
              <div v-for="c in organise" :key="c.icon" class="cmd" :class="{ split: c.split }">
                <button :class="c.tone" :aria-label="c.label"><Icon :name="c.icon" /></button>
                <button v-if="c.split" class="caret" :aria-label="c.label + ' options'"><Icon name="chevDown" :size="18" /></button>
              </div>
            </div>
            <div class="group">
              <div v-for="c in respond" :key="c.icon" class="cmd" :class="{ split: c.split }">
                <button :class="c.tone" :aria-label="c.label"><Icon :name="c.icon" /></button>
                <button v-if="c.split" class="caret" :aria-label="c.label + ' options'"><Icon name="chevDown" :size="18" /></button>
              </div>
            </div>
            <div class="group wide">
              <div class="quick">
                <button class="quick-main"><Icon name="bolt" class="gold" />Quick steps</button>
                <button class="quick-more" aria-label="More quick steps"><Icon name="chevDown" :size="18" /></button>
              </div>
              <button class="read"><Icon name="mailOpen" class="grey" />Read / Unread</button>
              <div v-for="c in marking" :key="c.icon" class="cmd" :class="{ split: c.split }">
                <button :class="c.tone" :aria-label="c.label"><Icon :name="c.icon" /></button>
                <button v-if="c.split" class="caret" :aria-label="c.label + ' options'"><Icon name="chevDown" :size="18" /></button>
              </div>
            </div>
            <div v-for="c in trailing" :key="c.icon" class="group">
              <div class="cmd">
                <button :class="c.tone" :aria-label="c.label"><Icon :name="c.icon" /></button>
              </div>
            </div>
          </div>
          <button class="ribbon-collapse" aria-label="Ribbon display options"><Icon name="chevDown" :size="24" /></button>
        </div>

        <div class="panes">
          <nav class="folders" aria-label="Folders">
            <section v-for="t in trees" :key="t.title">
              <h2><Icon name="chevDown" :size="20" />{{ t.title }}</h2>
              <ul>
                <li v-for="f in t.items" :key="f.label">
                  <a href="#" :class="{ active: f.active }">
                    <Icon :name="f.icon" :size="24" />
                    <span class="f-name">{{ f.label }}</span>
                    <span v-if="f.count" class="f-count" :class="{ unread: f.unread }">{{ f.count }}</span>
                  </a>
                </li>
              </ul>
            </section>
          </nav>

          <section class="list" aria-label="Message list">
            <div class="list-head">
              <button class="pivot on">Focused</button>
              <button class="pivot">Other</button>
              <div class="list-tools">
                <button aria-label="Select"><Icon name="select" :size="22" class="thick" /></button>
                <button aria-label="Filter"><Icon name="filter" :size="22" class="thick" /></button>
                <button aria-label="Sort"><Icon name="sort" :size="24" /></button>
              </div>
            </div>
            <div class="list-body">
              <div class="rows">
                <h3><Icon name="chevDown" :size="24" />Pinned</h3>
                <article class="mail tinted">
                  <span class="expander"></span>
                  <span class="avatar teal strong">GB</span>
                  <div class="mail-text">
                    <div class="line"><span class="from soft">Gokul Bhoi</span><span class="flags"><Icon name="link" class="grey" /><Icon name="pinFill" class="blue" /></span></div>
                    <div class="line black">D_POS module status ...</div>
                  </div>
                </article>
                <h3><Icon name="chevDown" :size="24" />Today</h3>
                <article v-for="m in mails" :key="m.id" class="mail tall" :class="{ selected: m.selected, tinted: m.selected }">
                  <button class="expander" aria-label="Expand conversation"><Icon name="chevRight" :size="22" /></button>
                  <span v-if="m.selected" class="tick"><input type="checkbox" aria-label="Select conversation" /></span>
                  <span v-else class="avatar violet strong">{{ m.initials }}</span>
                  <div class="mail-text">
                    <div class="line">
                      <span class="from">{{ m.from }}</span>
                      <span class="flags"><Icon v-for="i in m.icons" :key="i" :name="i" :class="i === 'at' ? 'link-blue' : 'grey'" /></span>
                    </div>
                    <div class="line"><span class="subject">{{ m.subject }}</span><time>{{ m.time }}</time></div>
                    <div class="line preview">{{ m.preview }}</div>
                    <div class="attach">
                      <a class="chip" href="#"><Icon name="excel" :size="20" />{{ m.attachment }}</a>
                      <span class="more-count">{{ m.more }}</span>
                    </div>
                  </div>
                </article>
              </div>
              <div class="vscroll" aria-hidden="true">
                <i class="arrow up"></i><i class="thumb short"></i><i class="arrow down"></i>
              </div>
            </div>
          </section>

          <main class="reading">
            <h1>TT29288&nbsp; - Reorder Level API Integration in Connect US</h1>
            <div class="thread">
              <div class="cards">
                <article class="message">
                  <div class="who">
                    <span class="avatar teal">GB<Icon name="away" :size="14" class="presence" /></span>
                  </div>
                  <div class="content">
                    <div class="top">
                      <div class="people">
                        <a class="sender" href="#">Gokul Bhoi</a>
                        <p>To: <span v-for="r in recipients" :key="r.name" class="person"><Icon :name="r.status" :size="13" />{{ r.name }}</span></p>
                        <p>Cc: <span class="person"><Icon name="available" :size="13" />Preeti Bokade</span></p>
                      </div>
                      <div class="side">
                        <div class="actions">
                          <button class="plain" aria-label="React"><Icon name="smile" :size="20" class="blue thick" /></button>
                          <button><Icon name="reply" :size="20" class="purple" />Reply</button>
                          <button><Icon name="replyAll" :size="20" class="purple" />Reply all</button>
                          <button class="hovered">
                            <Icon name="forward" :size="20" class="blue" />Forward
                            <span class="tooltip" role="tooltip">Forward</span>
                          </button>
                          <button class="plain" aria-label="Translate"><Icon name="translate" :size="18" /></button>
                          <button class="plain" aria-label="Loop"><Icon name="loop" :size="22" /></button>
                          <button class="plain ruled" aria-label="Apps"><Icon name="appGrid" :size="20" class="blue thick" /></button>
                          <button class="plain ruled" aria-label="More"><Icon name="dots" :size="18" class="dark" /></button>
                        </div>
                        <time>Wed 2/26/2025 6:12 PM</time>
                      </div>
                    </div>
                    <div class="body">
                      <p>Hello Saurabh and Kiran,</p>
                      <p>As discussed with <span class="mention">@Sanika Dewoolkar</span>, please reschedule your pending task for 27/02/2025. The module will be received tomorrow for testing.</p>
                      <p class="signature">Thanks &amp; Regards<br />Gokul Bhoi<br />TechneAI Pvt. Ltd.</p>
                    </div>
                    <button class="trimmed" aria-label="Show trimmed content"><Icon name="dotsSmall" :size="18" /></button>
                    <div class="answers">
                      <button><Icon name="reply" :size="20" class="purple" />Reply</button>
                      <button><Icon name="replyAll" :size="20" class="purple" />Reply all</button>
                      <button><Icon name="forward" :size="20" class="blue" />Forward</button>
                    </div>
                  </div>
                </article>
                <article v-for="e in earlier" :key="e.date" class="collapsed">
                  <span class="avatar" :class="e.tone">{{ e.initials }}</span>
                  <div class="c-main">
                    <div class="c-line"><span class="c-from">{{ e.from }}</span><Icon name="clip" :size="13" /></div>
                    <div class="c-line"><span>{{ e.preview }}</span><time>{{ e.date }}</time></div>
                  </div>
                </article>
                <article class="collapsed"></article>
              </div>
              <div class="vscroll right" aria-hidden="true">
                <i class="arrow up"></i><i class="thumb long"></i><i class="arrow down"></i>
              </div>
            </div>
            <div class="hscroll" aria-hidden="true">
              <i class="arrow left"></i><span class="track"><i class="thumb"></i></span><i class="arrow right"></i>
            </div>
          </main>
        </div>
      </div>
    </div>

    <footer class="taskbar">
      <button class="weather">
        <span class="w-icon"><Icon name="weather" :size="28" /><span class="w-badge">5</span></span>
        <span>32°C<br /><small>Mostly sunny</small></span>
      </button>
      <div class="dock">
        <button class="start" aria-label="Start"><Icon name="windows" :size="29" /></button>
        <label class="task-search">
          <Icon name="search" :size="20" class="bold" />
          <input type="search" placeholder="Search" aria-label="Search Windows" />
          <svg class="garland" viewBox="0 0 66 30" width="66" height="30" aria-hidden="true">
            <path d="M22 1 14 14M29 1l-2 13" stroke="#b4c877" stroke-width="4" fill="none" />
            <path d="M16 10c0 6 4 11 6 15-3 5-16 6-21 0 7-2 12-8 15-15z" fill="#ea8a86" />
            <path d="M24 11c-1 5-3 9-6 13 3 2 9 3 15 0-2-3-3-8-4-13z" fill="#e06a72" />
            <path d="M2 25c6 2 12 2 18-1M19 24c4 2 9 2 13 0" fill="none" stroke="#d2454f" stroke-width="1.500" />
            <path d="M37 2c0 19 14 32 27 15" fill="none" stroke="#ff9d1e" stroke-width="7" stroke-dasharray="5 1" />
            <path d="M37 2c0 19 14 32 27 15" fill="none" stroke="#ffcf4a" stroke-width="3" stroke-dasharray="2 4" />
          </svg>
        </label>
        <button v-for="a in taskApps" :key="a.icon" class="task" :class="{ running: a.running, active: a.active }" :aria-label="a.label">
          <span class="task-tile">
            <Icon :name="a.icon" :size="30" />
            <Icon v-if="a.online" name="available" :size="19" class="online" />
          </span>
        </button>
      </div>
      <div class="tray">
        <button class="t-chev" aria-label="Hidden icons"><Icon name="chevUp" :size="22" /></button>
        <button aria-label="Updates"><Icon name="sync" :size="22" class="medium" /></button>
        <button aria-label="OneDrive"><Icon name="cloudOff" :size="22" class="medium" /></button>
        <button class="lang">ENG<br />IN</button>
        <button class="status" aria-label="Network, volume and battery">
          <Icon name="wifi" :size="21" class="medium" /><Icon name="volume" :size="21" class="medium" /><Icon name="battery" :size="21" class="medium" />
        </button>
        <button class="clock">18:39<br />26-02-2025</button>
      </div>
    </footer>
  </div>
</template>

<style>
body {
  margin: 0;
}
</style>

<style scoped>
.desktop {
  height: 100vh;
  display: flex;
  flex-direction: column;
  overflow: hidden;
  background: #f5f5f5;
  color: #242424;
  font-family: 'Open Sans', 'Noto Sans', sans-serif;
  font-size: 18px;
}
* {
  box-sizing: border-box;
}
button,
input {
  font: inherit;
  color: inherit;
  background: none;
  border: 0;
  padding: 0;
  margin: 0;
}
button {
  display: flex;
  align-items: center;
  justify-content: center;
  flex-shrink: 0;
  white-space: nowrap;
}
input:focus {
  outline: none;
}
a {
  color: inherit;
  text-decoration: none;
}
h1,
h2,
h3,
p,
ul {
  margin: 0;
  padding: 0;
  list-style: none;
}
svg {
  flex-shrink: 0;
  display: block;
}
svg.bold {
  stroke-width: 2.4;
}
svg.medium {
  stroke-width: 1.9;
}
svg.thick {
  stroke-width: 1.6;
}
.grey { color: #616161; }
.dark { color: #242424; }
.green { color: #498205; }
.red { color: #b52e31; }
.blue { color: #0078d4; }
.link-blue { color: #0064b4; }
.purple { color: #881798; }
.gold { color: #ae8500; }
.faded { color: #bdbdbd; }

/* Browser frame */
.tabstrip {
  position: relative;
  z-index: 1;
  height: 50px;
  flex-shrink: 0;
  display: flex;
  align-items: flex-end;
  background: #cbeabf;
  padding-left: 8px;
  font-size: 14px;
  color: #1f1f1f;
}
.tab-search {
  width: 35px;
  height: 34px;
  margin: 0 7px 8px 0;
  background: #fff;
  border-radius: 12px;
}
.tab {
  position: relative;
  width: 290px;
  height: 42px;
  padding: 0 12px 7px 10px;
  display: flex;
  align-items: center;
  gap: 10px;
}
.tab + .tab {
  padding-left: 17px;
  padding-right: 5px;
}
.tab.current {
  background: #fff;
  border-radius: 12px 12px 0 0;
}
.tab.current::before,
.tab.current::after {
  content: '';
  position: absolute;
  bottom: 0;
  width: 14px;
  height: 14px;
}
.tab.current::before {
  right: 100%;
  background: radial-gradient(circle at 0 0, transparent 13px, #fff 14px);
}
.tab.current::after {
  left: 100%;
  background: radial-gradient(circle at 100% 0, transparent 13px, #fff 14px);
}
.tab-title {
  flex: 1;
  min-width: 0;
  overflow: hidden;
  white-space: nowrap;
}
.tab-title.fade {
  mask-image: linear-gradient(90deg, #000 88%, transparent);
}
.tab-close {
  width: 16px;
  height: 24px;
}
.tab-divider {
  width: 2px;
  height: 20px;
  margin: 0 12px 15px 10px;
  background: #fff;
}
.new-tab {
  width: 18px;
  height: 50px;
}
.window-controls {
  margin-left: auto;
  display: flex;
}
.window-controls button {
  width: 57px;
  height: 50px;
}
.browser {
  position: relative;
  flex-shrink: 0;
  background: #fff;
  border-radius: 10px 10px 0 0;
  box-shadow: 0 -10px 0 #cbeabf;
}
.navbar {
  height: 58px;
  padding: 0 12px 0 5px;
  display: flex;
  align-items: center;
}
.nav {
  width: 45px;
  height: 42px;
}
.nav.dim {
  color: #a5a5a5;
}
.omnibox {
  flex: 1;
  min-width: 0;
  height: 42px;
  margin: 0 11px 0 10px;
  padding: 0 10px 0 5px;
  display: flex;
  align-items: center;
  background: #e0e0e0;
  border-radius: 21px;
}
.site-info {
  width: 31px;
  height: 31px;
  border-radius: 50%;
  background: #fff;
}
.url {
  flex: 1;
  min-width: 0;
  height: 42px;
  margin-left: 10px;
  font-size: 17px;
  background: linear-gradient(90deg, #1f1f1f 144px, #5f6368 144px);
  background-clip: text;
  -webkit-text-fill-color: transparent;
}
.omni-btn {
  width: 40px;
  height: 40px;
  color: #5a5a5a;
}
.ext {
  width: 45px;
  height: 40px;
}
.green-rule {
  width: 3px;
  height: 20px;
  background: #cbeabf;
  border-radius: 1px;
}
.ext + .green-rule {
  margin-left: 10px;
}
.profile {
  width: 65px;
}
.kebab {
  width: 28px;
}
.bookmarks {
  height: 43px;
  padding: 0 18px 8px 14px;
  display: flex;
  align-items: center;
  font-size: 14px;
}
.bookmarks .green-rule {
  margin-left: auto;
  margin-right: 20px;
}
.bm-all {
  gap: 10px;
}
.bm-all svg,
.bm-apps svg {
  color: #4a4a4a;
}

/* Suite header */
.suite {
  height: 66px;
  flex-shrink: 0;
  display: flex;
  align-items: center;
  background: #000;
  color: #fff;
}
.waffle {
  width: 64px;
  height: 66px;
}
.brand {
  width: 310px;
  padding-left: 13px;
  font-size: 21px;
  font-weight: 600;
}
.suite-search {
  width: 484px;
  height: 44px;
  padding: 0 13px;
  display: flex;
  align-items: center;
  gap: 8px;
  background: #fff;
  border: 1px solid #8a8a8a;
  border-radius: 5px;
  color: #424242;
}
.suite-search input {
  flex: 1;
  min-width: 0;
}
input::placeholder {
  color: #484848;
  opacity: 1;
}
.suite-actions {
  margin-left: auto;
  display: flex;
}
.suite-actions button {
  position: relative;
  width: 66px;
  height: 66px;
}
.badge {
  position: absolute;
  top: 11px;
  right: 11px;
  width: 22px;
  height: 22px;
  border-radius: 50%;
  background: #d13438;
  font-size: 14px;
  line-height: 22px;
  text-align: center;
}
.account {
  width: 44px;
  height: 44px;
  border: 1px solid #fff;
  border-radius: 50%;
  line-height: 44px;
  font-size: 17px;
}

/* App */
.app {
  flex: 1;
  min-height: 0;
  display: flex;
}
.rail {
  width: 67px;
  flex-shrink: 0;
  background: #f0f0f0;
  display: flex;
  flex-direction: column;
}
.rail a {
  position: relative;
  height: 63px;
  display: flex;
  align-items: center;
  justify-content: center;
}
.rail a.on::before {
  content: '';
  position: absolute;
  left: 3px;
  top: 10px;
  width: 3px;
  height: 44px;
  border-radius: 2px;
  background: #0078d4;
}
.rail a.more {
  height: 54px;
  color: #555;
}
.workspace {
  flex: 1;
  min-width: 0;
  display: flex;
  flex-direction: column;
}
.ribbon-tabs {
  height: 50px;
  flex-shrink: 0;
  padding: 0 19px 0 11px;
  display: flex;
  align-items: flex-start;
}
.burger {
  width: 60px;
  height: 44px;
}
.ribbon-tab {
  position: relative;
  height: 44px;
  margin-left: 18px;
  margin-right: 25px;
}
.ribbon-tab.on {
  font-weight: 600;
}
.ribbon-tab.on::after {
  content: '';
  position: absolute;
  left: 0;
  right: 0;
  bottom: 1px;
  height: 4px;
  border-radius: 2px;
  background: #0078d4;
}
.reminder {
  margin-left: auto;
  display: flex;
  align-items: center;
  gap: 14px;
  font-size: 16px;
  line-height: 22px;
  white-space: nowrap;
}
.reminder svg {
  margin-top: 8px;
}
.reminder b {
  font-weight: 600;
}
.ribbon-row {
  flex-shrink: 0;
  display: flex;
  align-items: flex-end;
  padding-left: 11px;
}
.ribbon {
  flex: 1;
  min-width: 0;
  height: 55px;
  padding-left: 6px;
  display: flex;
  align-items: center;
  background: #fff;
  border-radius: 5px;
  box-shadow: 0 1px 4px rgba(0, 0, 0, 0.24);
}
.ribbon-collapse {
  width: 27px;
  height: 30px;
  padding-right: 3px;
  color: #424242;
}
.new-mail {
  width: 150px;
  height: 44px;
  padding-right: 4px;
  gap: 16px;
  background: #0078d4;
  color: #fff;
  border-radius: 5px 0 0 5px;
}
.new-mail-more {
  width: 38px;
  height: 44px;
  margin-left: 2px;
  background: #0078d4;
  color: #fff;
  border-radius: 0 5px 5px 0;
}
.group {
  height: 44px;
  padding: 0 7px 0 14px;
  display: flex;
  align-items: center;
  gap: 10px;
  border-left: 1px solid #dedede;
}
.group.first {
  padding-left: 15px;
  border-left-color: transparent;
}
.group.wide {
  padding-left: 5px;
}
.cmd {
  display: flex;
  padding-right: 9px;
}
.cmd.split {
  padding-right: 0;
}
.cmd button {
  width: 36px;
  height: 44px;
  padding-bottom: 3px;
}
.cmd button.caret {
  width: 20px;
  color: #616161;
}
.quick {
  width: 169px;
  height: 44px;
  display: flex;
  border: 1px solid #e0e0e0;
  border-radius: 5px;
  color: #000;
}
.quick-main {
  flex: 1;
  gap: 5px;
}
.quick-more {
  width: 22px;
  border-left: 1px solid #e0e0e0;
}
.read {
  width: 180px;
  height: 44px;
  gap: 7px;
  justify-content: flex-start;
  padding-left: 11px;
}

/* Panes */
.panes {
  flex: 1;
  min-height: 0;
  display: flex;
  padding-top: 11px;
}
.folders {
  width: 297px;
  flex-shrink: 0;
  padding: 0 24px 0 12px;
}
.folders h2 {
  height: 58px;
  padding: 3px 0 0 7px;
  display: flex;
  align-items: center;
  gap: 10px;
  font-size: 20px;
  font-weight: 600;
}
.folders section + section h2 {
  height: 69px;
  padding-top: 14px;
}
.folders h2 svg {
  color: #555;
}
.folders li a {
  height: 49px;
  padding: 0 12px 0 38px;
  display: flex;
  align-items: center;
  gap: 10px;
  border-radius: 5px;
  white-space: nowrap;
}
.folders li svg {
  color: #424242;
}
.folders li a.active {
  background: #f3f9fd;
}
.active .f-name {
  font-weight: 600;
}
.f-name {
  flex: 1;
}
.f-count {
  color: #616161;
}
.f-count.unread {
  color: #0064b4;
  font-weight: 600;
}
.list {
  width: 484px;
  flex-shrink: 0;
  margin-left: 1px;
  display: flex;
  flex-direction: column;
  border-radius: 5px 5px 0 0;
  box-shadow: 0 0 2px rgba(0, 0, 0, 0.3);
}
.list-head {
  height: 61px;
  flex-shrink: 0;
  padding: 0 26px 0 99px;
  display: flex;
  align-items: center;
  background: #fff;
  border-bottom: 1px solid #d9d9d9;
  border-radius: 5px 5px 0 0;
}
.pivot {
  position: relative;
  height: 60px;
  margin-right: 24px;
  font-size: 20px;
}
.pivot.on {
  font-weight: 600;
}
.pivot.on::after {
  content: '';
  position: absolute;
  left: 8px;
  right: 8px;
  bottom: 8px;
  height: 2px;
  background: #0078d4;
}
.list-tools {
  margin-left: auto;
  display: flex;
  gap: 22px;
}
.list-body {
  flex: 1;
  min-height: 0;
  display: flex;
}
.rows {
  flex: 1;
  min-width: 0;
  overflow: hidden;
}
.rows h3 {
  height: 51px;
  padding-left: 54px;
  display: flex;
  align-items: center;
  gap: 21px;
  font-size: 18px;
  font-weight: 600;
  border-bottom: 1px solid #dcdfe1;
}
.rows h3 svg {
  color: #333;
}
.mail {
  height: 82px;
  padding: 11px 61px 0 0;
  display: flex;
  align-items: flex-start;
  background: #fff;
  border-bottom: 1px solid #d9dcde;
}
.mail.tall {
  height: 159px;
}
.mail.tinted {
  background: #f3f9fd;
}
.mail.selected {
  box-shadow: inset 5px 0 0 #0064b4;
}
.expander {
  width: 44px;
  height: 56px;
  flex-shrink: 0;
  padding-left: 8px;
  color: #424242;
}
.selected .expander {
  color: #0064b4;
}
.avatar {
  position: relative;
  width: 44px;
  height: 44px;
  flex-shrink: 0;
  border-radius: 50%;
  display: flex;
  align-items: center;
  justify-content: center;
  font-size: 15px;
  font-weight: 600;
}
.avatar.strong {
  margin-top: 6px;
  font-size: 18px;
}
.teal { background: #94c8d4; color: #00333f; }
.violet { background: #d2ccf8; color: #3f3682; }
.slate { background: #cdd6d8; color: #3b4447; font-weight: 500; }
.rose { background: #f1bbbc; color: #751d1f; font-weight: 500; }
.tick {
  width: 44px;
  height: 56px;
  display: flex;
  align-items: center;
  justify-content: center;
}
.tick input {
  appearance: none;
  width: 22px;
  height: 22px;
  border: 1px solid #424242;
  border-radius: 3px;
  background: #fff;
}
.mail-text {
  flex: 1;
  min-width: 0;
  margin-left: 11px;
}
.line {
  display: flex;
  align-items: center;
  justify-content: space-between;
  height: 27px;
  white-space: nowrap;
}
.black {
  color: #000;
}
.soft {
  color: #424242;
}
.selected .from {
  font-weight: 600;
}
.selected .subject,
.selected time {
  color: #0064b4;
  font-weight: 600;
}
.mail time {
  font-size: 16px;
}
.preview {
  color: #616161;
}
.flags {
  display: flex;
  gap: 24px;
  padding-right: 4px;
}
.attach {
  margin-top: 9px;
  display: flex;
  align-items: center;
  gap: 12px;
}
.chip {
  width: 181px;
  height: 39px;
  padding-left: 12px;
  display: flex;
  align-items: center;
  gap: 7px;
  background: #fff;
  border: 1px solid #dcdcdc;
  border-radius: 3px;
  font-size: 16px;
  color: #424242;
  white-space: nowrap;
}
.more-count {
  font-size: 18px;
  color: #808080;
}

/* Scrollbars */
.vscroll {
  width: 24px;
  flex-shrink: 0;
  padding: 12px 0 10px;
  display: flex;
  flex-direction: column;
  align-items: center;
}
.arrow {
  width: 0;
  height: 0;
  border: 4px solid transparent;
}
.arrow.up { border-bottom: 5px solid #808080; border-top: 0; }
.arrow.down { border-top: 5px solid #808080; border-bottom: 0; margin-top: auto; }
.arrow.left { border-right: 5px solid #808080; border-left: 0; }
.arrow.right { border-left: 5px solid #808080; border-right: 0; }
.thumb {
  width: 8px;
  border-radius: 4px;
  background: #808080;
}
.thumb.short {
  height: 52px;
  margin-top: 13px;
}
.thumb.long {
  height: 180px;
  margin-top: 14px;
}
.hscroll {
  height: 25px;
  flex-shrink: 0;
  padding: 0 34px 0 8px;
  display: flex;
  align-items: center;
  gap: 14px;
}
.track {
  flex: 1;
}
.hscroll .thumb {
  display: block;
  width: 80%;
  height: 8px;
}

/* Reading pane */
.reading {
  flex: 1;
  min-width: 0;
  margin-left: 12px;
  display: flex;
  flex-direction: column;
}
.reading h1 {
  height: 60px;
  flex-shrink: 0;
  margin-right: 26px;
  padding: 2px 0 0 17px;
  display: flex;
  align-items: center;
  background: #fff;
  border-radius: 5px;
  box-shadow: 0 1px 4px rgba(0, 0, 0, 0.24);
  font-size: 21px;
  font-weight: 600;
  white-space: nowrap;
}
.thread {
  flex: 1;
  min-height: 0;
  display: flex;
  padding-top: 14px;
}
.cards {
  flex: 1;
  min-width: 0;
  display: flex;
  flex-direction: column;
  gap: 9px;
  clip-path: inset(-60px -4px 3px -4px);
  font-size: 14px;
}
.vscroll.right {
  width: 22px;
  margin: 0 1px 0 4px;
  padding: 8px 0 9px;
}
.message {
  height: 388px;
  flex-shrink: 0;
  display: flex;
  background: #fff;
  border-radius: 5px;
  box-shadow: 0 1px 4px rgba(0, 0, 0, 0.24);
}
.who {
  width: 71px;
  flex-shrink: 0;
  padding: 18px 0 0 13px;
}
.presence {
  position: absolute;
  right: 0;
  bottom: 0;
}
.content {
  flex: 1;
  min-width: 0;
}
.top {
  display: flex;
  justify-content: space-between;
  height: 115px;
}
.people {
  padding-top: 12px;
  white-space: nowrap;
  color: #424242;
}
.sender {
  display: block;
  height: 30px;
  line-height: 30px;
  font-weight: 600;
  color: #0078d4;
}
.people p {
  height: 28px;
  display: flex;
  align-items: center;
}
.person {
  display: flex;
  align-items: center;
  gap: 5px;
  margin-left: 7px;
}
.person + .person {
  margin-left: 13px;
}
.side {
  padding: 10px 14px 0 0;
  display: flex;
  flex-direction: column;
  align-items: flex-end;
}
.side time {
  margin: 4px 10px 0 0;
  font-size: 13px;
  color: #424242;
}
.actions {
  display: flex;
  font-size: 15px;
  color: #424242;
}
.actions button {
  height: 34px;
  padding: 0 9px;
  gap: 10px;
}
.actions button.plain {
  width: 36px;
  padding: 0;
}
.actions button.ruled {
  width: 41px;
  background: linear-gradient(#dadada, #dadada) left center / 1px 20px no-repeat;
}
.actions button.hovered {
  position: relative;
  background: #f3f9fd;
  color: #242424;
  border-radius: 3px;
}
.tooltip {
  position: absolute;
  bottom: 38px;
  left: 50%;
  transform: translateX(-50%);
  width: 81px;
  height: 44px;
  line-height: 44px;
  text-align: center;
  font-size: 15px;
  color: #000;
  background: #fff;
  border-radius: 4px;
  filter: drop-shadow(0 2px 5px rgba(0, 0, 0, 0.24));
}
.tooltip::after {
  content: '';
  position: absolute;
  top: 100%;
  left: 50%;
  margin-left: -15px;
  border: 15px solid transparent;
  border-top-color: #fff;
  border-bottom: 0;
}
.body {
  padding: 12px 40px 0 0;
  font-family: Roboto, 'Liberation Sans', sans-serif;
  font-size: 17px;
  line-height: 22px;
  color: #000;
}
.body p {
  margin-bottom: 17px;
}
.mention {
  background: #f3f2f1;
  border-radius: 2px;
}
.body .signature {
  margin-bottom: 14px;
  font: italic 700 17px/22px Lato, 'Liberation Sans', sans-serif;
}
.trimmed {
  width: 35px;
  height: 14px;
  background: #f3f9fd;
  border-radius: 2px;
  color: #0064b4;
}
.answers {
  margin-top: 18px;
  display: flex;
  gap: 4px;
  font-size: 15px;
}
.answers button {
  height: 36px;
  padding: 0 13px 0 14px;
  gap: 7px;
  border: 1px solid #e0e0e0;
  border-radius: 4px;
}
.collapsed {
  height: 84px;
  flex-shrink: 0;
  display: flex;
  align-items: flex-start;
  padding: 15px 23px 0 12px;
  background: #fafafa;
  border: 1px solid #ededed;
  border-radius: 5px;
  color: #616161;
}
.collapsed .avatar {
  margin-top: 2px;
}
.c-main {
  flex: 1;
  min-width: 0;
  margin-left: 14px;
}
.c-line {
  height: 26px;
  display: flex;
  align-items: center;
  justify-content: space-between;
  white-space: nowrap;
}
.c-line time {
  font-size: 15px;
}
.c-line svg {
  margin-right: 2px;
}
.c-from {
  color: #333;
}

/* Taskbar */
.taskbar {
  height: 60px;
  flex-shrink: 0;
  display: flex;
  align-items: center;
  border-top: 1px solid #bdbdbd;
  background: linear-gradient(90deg, #efefef 0 50%, #f5e5f6 62%, #f9e4fa 74%, #f5e5f7 86%, #f2eaf3 93%, #f2e8f5);
  font-size: 14px;
  line-height: 20px;
  color: #1f1f1f;
}
.weather {
  width: 499px;
  padding: 0 0 2px 27px;
  gap: 9px;
  justify-content: flex-start;
  text-align: left;
}
.weather small {
  font-size: 14px;
  color: #5f5f5f;
}
.w-icon {
  position: relative;
}
.w-badge {
  position: absolute;
  top: -7px;
  right: -4px;
  width: 20px;
  height: 20px;
  border-radius: 50%;
  background: #c42b1c;
  color: #fff;
  text-align: center;
}
.dock {
  display: flex;
  align-items: center;
  height: 59px;
}
.start {
  width: 36px;
  height: 59px;
}
.task-search {
  width: 274px;
  height: 40px;
  margin: 0 4px 0 13px;
  padding: 0 2px 0 12px;
  display: flex;
  align-items: center;
  gap: 12px;
  background: #fbfbfb;
  border: 1px solid #dcdcdc;
  border-radius: 20px;
}
.task-search input {
  flex: 1;
  min-width: 0;
  font-size: 15px;
}
.task {
  position: relative;
  width: 55px;
  height: 59px;
}
.task-tile {
  position: relative;
  width: 48px;
  height: 48px;
  display: flex;
  align-items: center;
  justify-content: center;
  border-radius: 5px;
}
.task.active .task-tile {
  background: #fbf4fb;
  box-shadow: 0 0 1px rgba(0, 0, 0, 0.3);
}
.task.running::after {
  content: '';
  position: absolute;
  bottom: 5px;
  left: 50%;
  width: 8px;
  height: 4px;
  margin-left: -4px;
  border-radius: 2px;
  background: #8d878d;
}
.task.active::after {
  width: 20px;
  margin-left: -10px;
  background: #0078d4;
}
.online {
  position: absolute;
  top: 0;
  right: 3px;
}
.tray {
  margin-left: auto;
  display: flex;
  align-items: center;
  padding-right: 24px;
}
.tray button {
  width: 40px;
}
.tray .lang {
  width: 56px;
  padding-bottom: 2px;
  font-size: 15px;
}
.tray .status {
  width: 96px;
  gap: 9px;
}
.tray .clock {
  width: 92px;
  padding-bottom: 2px;
  justify-content: flex-end;
  text-align: right;
  font-size: 15px;
}
</style>
